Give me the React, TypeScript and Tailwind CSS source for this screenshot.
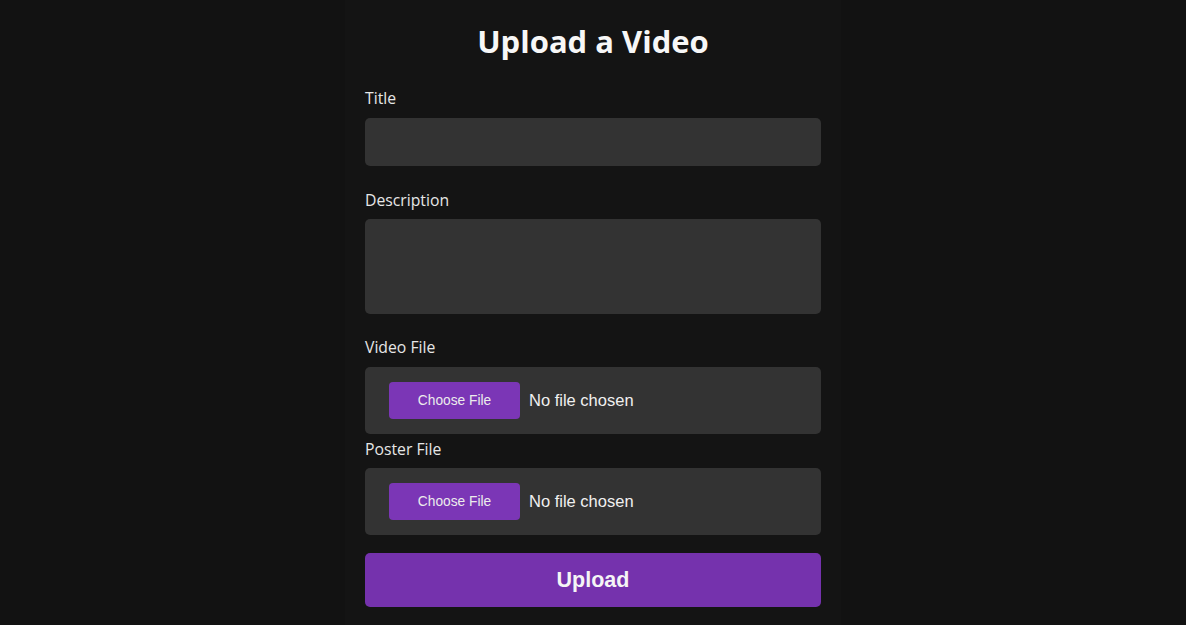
import { useState } from 'react';

interface FilePickerProps {
  id: string;
  onPick: (name: string) => void;
  fileName: string;
}

function FilePicker({ id, onPick, fileName }: FilePickerProps) {
  return (
    <label
      htmlFor={id}
      className="flex h-[67px] items-center rounded-[5px] bg-[#333333] pl-6 cursor-pointer"
    >
      <input
        id={id}
        type="file"
        className="hidden"
        onChange={(e) => onPick(e.target.files?.[0]?.name || '')}
      />
      <span className="flex h-[37px] w-[131px] items-center justify-center rounded-[4px] bg-[#7b36b6] pt-px text-[13.75px] text-[#ececec] font-['Liberation_Sans',Arial,sans-serif]">
        Choose File
      </span>
      <span className="ml-[9px] text-[16.5px] text-[#f0f0f0] font-['Liberation_Sans',Arial,sans-serif]">
        {fileName || 'No file chosen'}
      </span>
    </label>
  );
}

export default function App() {
  const [title, setTitle] = useState('');
  const [description, setDescription] = useState('');
  const [videoName, setVideoName] = useState('');
  const [posterName, setPosterName] = useState('');

  const labelClass = "block h-5 text-[15.75px] leading-5 text-[#e6e6e6]";

  return (
    <div className="min-h-[625px] bg-[#121212] font-['Open_Sans','Noto_Sans',sans-serif]">
      <div className="mx-auto w-[496px] min-h-[625px] bg-[#141414] px-5 pt-[23px]">
        <h1 className="mb-[29px] h-9 text-center text-[31px] leading-9 font-bold text-[#f7f7f7]">
          Upload a Video
        </h1>

        <form onSubmit={(e) => e.preventDefault()}>
          <label className={`${labelClass} mb-[10px]`}>Title</label>
          <input
            type="text"
            value={title}
            onChange={(e) => setTitle(e.target.value)}
            className="block h-12 w-full rounded-[5px] bg-[#333333] px-3 text-white outline-none"
          />

          <label className={`${labelClass} mt-6 mb-[9px]`}>Description</label>
          <textarea
            value={description}
            onChange={(e) => setDescription(e.target.value)}
            className="block h-[95px] w-full resize-none rounded-[5px] bg-[#333333] p-3 text-white outline-none"
          />

          <label className={`${labelClass} mt-[23px] mb-[10px]`}>Video File</label>
          <FilePicker id="video" fileName={videoName} onPick={setVideoName} />

          <label className={`${labelClass} mt-[5px] mb-[9px]`}>Poster File</label>
          <FilePicker id="poster" fileName={posterName} onPick={setPosterName} />

          <button
            type="submit"
            className="mt-[18px] flex h-[54px] w-full items-center justify-center rounded-[5px] bg-[#7532ad] text-[21.5px] font-bold text-[#f5f5f5] font-['Liberation_Sans',Arial,sans-serif]"
          >
            Upload
          </button>
        </form>
      </div>
    </div>
  );
}
